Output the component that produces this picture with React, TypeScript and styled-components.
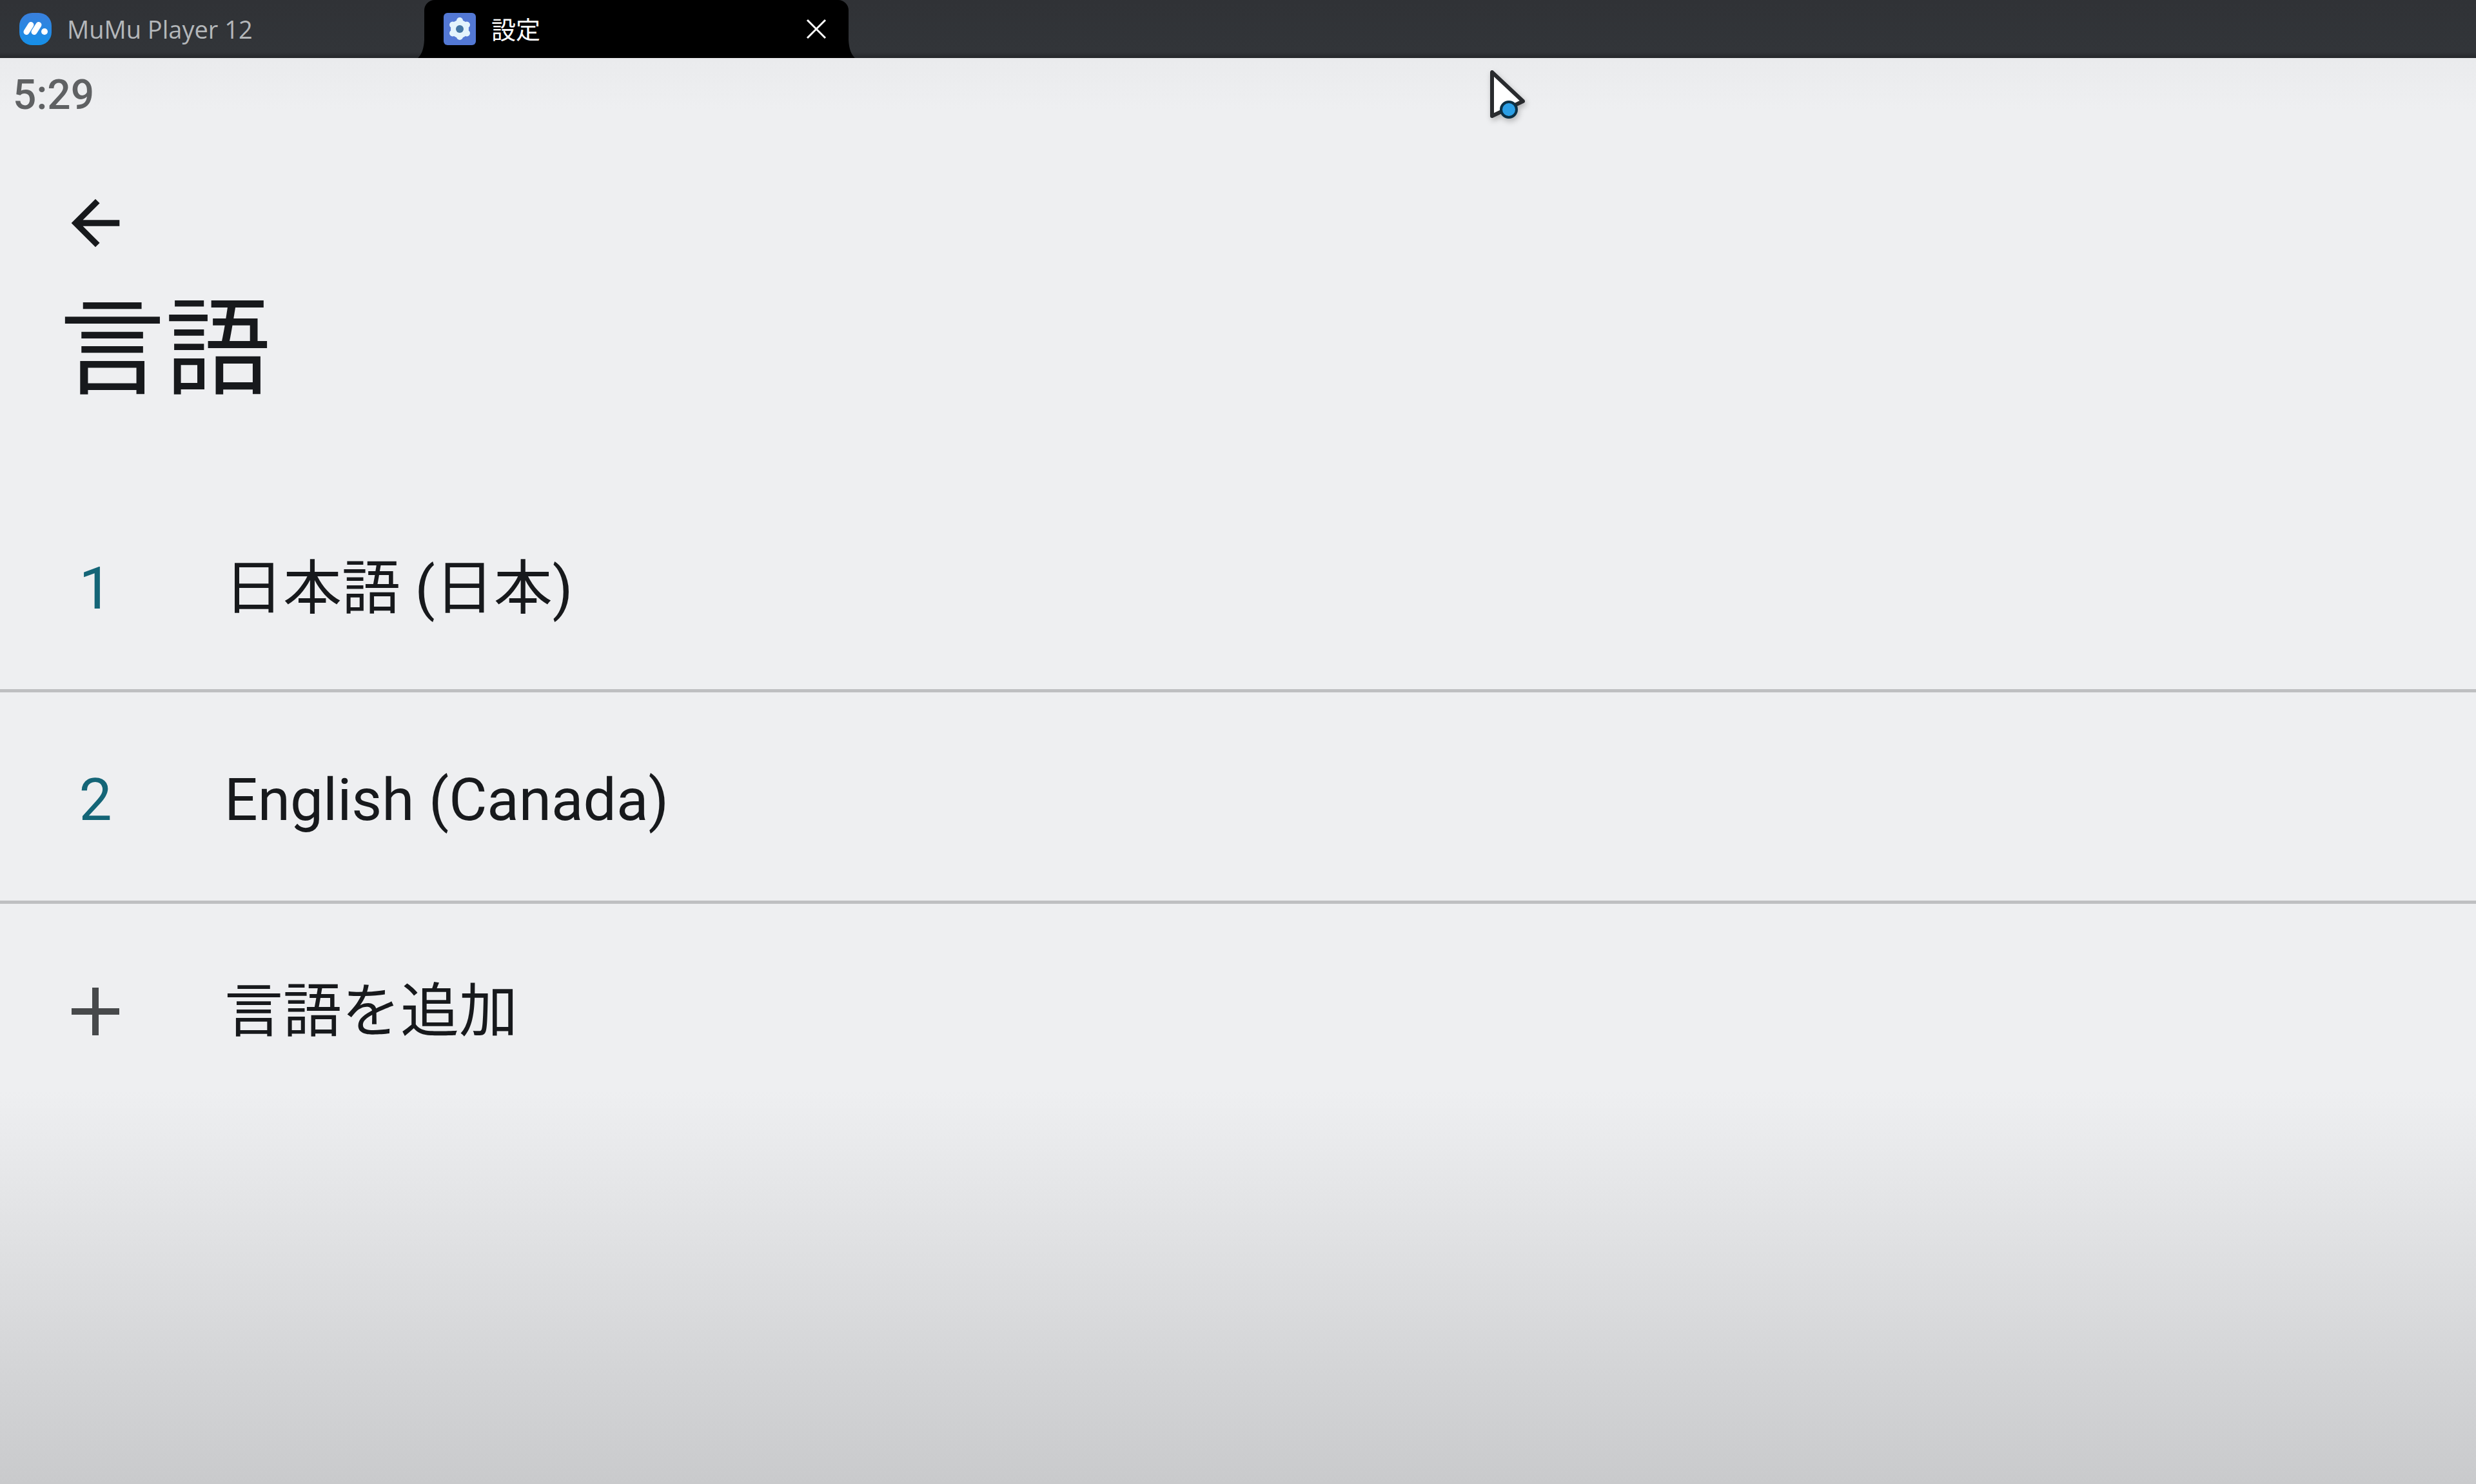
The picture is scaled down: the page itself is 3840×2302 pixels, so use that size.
import React from "react";
import styled, { createGlobalStyle } from "styled-components";

const GlobalStyle = createGlobalStyle`
  *, *::before, *::after { box-sizing: border-box; }
  body { margin: 0; background: #eeeff1; }
`;

const Window = styled.div`
  position: relative;
  display: flex;
  flex-direction: column;
  min-height: 100vh;
  font-family: Roboto, "Noto Sans CJK JP", sans-serif;
  color: #17191c;
`;

const TabBar = styled.nav`
  display: flex;
  height: 90px;
  background: linear-gradient(#303236, #323539 90%, #26282b);
`;

const Tab = styled.div<{ $active?: boolean }>`
  position: relative;
  display: flex;
  align-items: center;
  width: 658px;
  padding: 0 34px 0 30px;
  gap: 24px;
  border-radius: 16px 16px 0 0;
  background: ${(p) => (p.$active ? "#000" : "transparent")};
  color: ${(p) => (p.$active ? "#fff" : "#b4b7ba")};
`;

const TabLabel = styled.span`
  flex: 1;
  font-family: "Open Sans", "Noto Sans CJK JP", sans-serif;
  font-size: 38px;
  line-height: 48px;
`;

const TabFlare = styled.svg<{ $side: "left" | "right" }>`
  position: absolute;
  bottom: 0;
  ${(p) => p.$side}: -10px;
  width: 10px;
  height: 28px;
`;

const IconButton = styled.button`
  display: flex;
  padding: 0;
  border: 0;
  background: none;
  color: inherit;
`;

const Screen = styled.main`
  flex: 1;
  background: linear-gradient(to bottom, #eaebed 0, #eeeff1 80px, #eeeff1 1600px, #c9cacc 100%);
`;

const StatusBar = styled.header`
  padding: 22px 20px 18px;
  font-size: 64px;
  font-weight: 500;
  line-height: 72px;
  color: #5f6163;
`;

const Heading = styled.div`
  display: flex;
  flex-direction: column;
  align-items: flex-start;
  padding: 88px 92px 104px;
  gap: 40px;
`;

const Title = styled.h1`
  margin: 0;
  font-size: 164px;
  font-weight: 400;
  line-height: 200px;
`;

const List = styled.ol`
  margin: 0;
  padding: 0;
  list-style: none;
`;

const Item = styled.li`
  height: 328px;
  border-bottom: 5px solid #bebfc1;
  &:last-child { border-color: transparent; }
`;

const ItemButton = styled.button`
  display: flex;
  align-items: center;
  width: 100%;
  height: 100%;
  padding: 10px 96px 0;
  border: 0;
  background: none;
  color: inherit;
  font: inherit;
  font-size: 91px;
  line-height: 120px;
  text-align: left;
`;

const Marker = styled.span`
  display: flex;
  justify-content: center;
  width: 104px;
  margin-right: 148px;
  color: #146577;
`;

const Pointer = styled.svg`
  position: absolute;
  top: 104px;
  left: 2304px;
  width: 72px;
  height: 92px;
  filter: drop-shadow(2px 4px 4px rgba(0, 0, 0, 0.25));
`;

function MumuLogo() {
  return (
    <svg width="50" height="50" viewBox="0 0 50 50" aria-hidden="true">
      <defs>
        <linearGradient id="mumu" x1="0" y1="0" x2="0" y2="1">
          <stop offset="0" stopColor="#3a7fdc" />
          <stop offset="1" stopColor="#1590e8" />
        </linearGradient>
      </defs>
      <rect width="50" height="50" rx="20" fill="url(#mumu)" />
      <path d="M11 29.500L18 18.500M23 29.500L30 18.500" stroke="#fff" strokeWidth="9" strokeLinecap="round" />
      <circle cx="39" cy="29" r="5" fill="#fff" />
    </svg>
  );
}

function GearLogo() {
  return (
    <svg width="50" height="50" viewBox="0 0 50 50" aria-hidden="true">
      <rect width="50" height="50" rx="6" fill="#5378d4" />
      <g stroke="#e4f4fc" strokeWidth="10" strokeLinecap="round">
        <path d="M25 12V37M14 18.500L36 31.500M36 18.500L14 31.500" />
      </g>
      <circle cx="25" cy="25" r="14" fill="#e4f4fc" />
      <circle cx="25" cy="25" r="6" fill="#4477a4" />
    </svg>
  );
}

const languages = ["日本語 (日本)", "English (Canada)"];

export default function App() {
  return (
    <>
      <GlobalStyle />
      <Window>
        <TabBar>
          <Tab>
            <MumuLogo />
            <TabLabel>MuMu Player 12</TabLabel>
          </Tab>
          <Tab $active>
            <TabFlare $side="left" viewBox="0 0 10 28" aria-hidden="true"><path d="M10 0Q9 20 0 28H10Z" /></TabFlare>
            <GearLogo />
            <TabLabel>設定</TabLabel>
            <IconButton aria-label="閉じる">
              <svg width="32" height="32" viewBox="0 0 32 32"><path d="M2 2L30 30M30 2L2 30" stroke="currentColor" strokeWidth="3" /></svg>
            </IconButton>
            <TabFlare $side="right" viewBox="0 0 10 28" aria-hidden="true"><path d="M0 0Q1 20 10 28H0Z" /></TabFlare>
          </Tab>
        </TabBar>
        <Screen>
          <StatusBar>5:29</StatusBar>
          <Heading>
            <IconButton aria-label="戻る">
              <svg width="112" height="112" viewBox="0 0 24 24"><path d="M20 11H7.830l5.590-5.590L12 4l-8 8 8 8 1.410-1.410L7.830 13H20v-2z" fill="currentColor" /></svg>
            </IconButton>
            <Title>言語</Title>
          </Heading>
          <List>
            {languages.map((name, i) => (
              <Item key={name}>
                <ItemButton>
                  <Marker>{i + 1}</Marker>
                  {name}
                </ItemButton>
              </Item>
            ))}
            <Item>
              <ItemButton>
                <Marker>
                  <svg width="74" height="74" viewBox="0 0 74 74" aria-hidden="true"><path d="M37 0V74M0 37H74" stroke="#47494b" strokeWidth="10" /></svg>
                </Marker>
                言語を追加
              </ItemButton>
            </Item>
          </List>
        </Screen>
        <Pointer viewBox="0 0 72 92" aria-hidden="true">
          <path d="M10 8V76L58 53Z" fill="#fff" stroke="#292b2e" strokeWidth="6" strokeLinejoin="round" />
          <circle cx="36" cy="66" r="12" fill="#2b9fe6" stroke="#0c3044" strokeWidth="4" />
        </Pointer>
      </Window>
    </>
  );
}
